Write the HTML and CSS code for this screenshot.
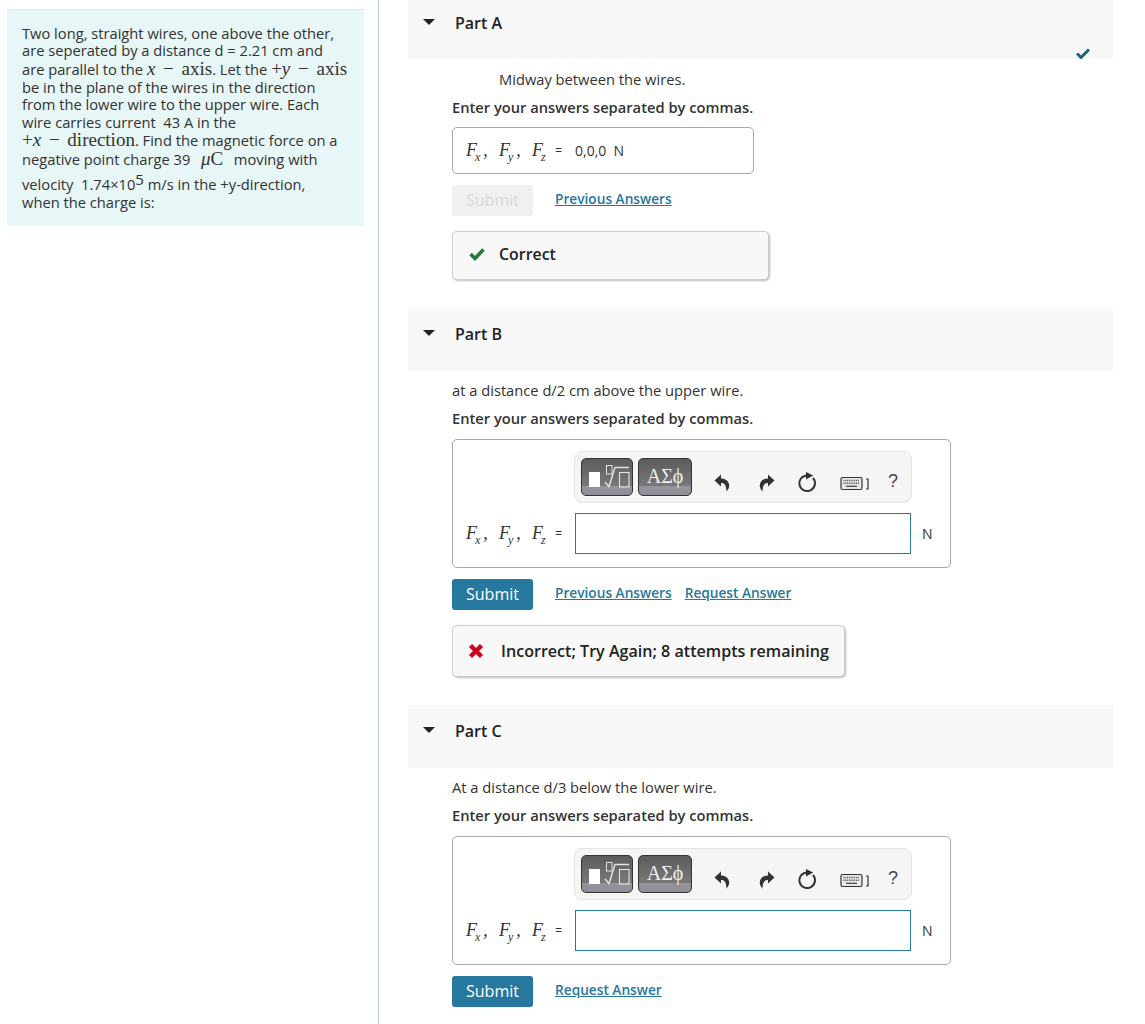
FILE: index.html
```html
<!DOCTYPE html>
<html lang="en">
<head>
<meta charset="utf-8">
<title>Magnetic force on a point charge</title>
<link rel="stylesheet" href="styles.css">
</head>
<body>
<svg class="defs" width="0" height="0" aria-hidden="true">
  <symbol id="i-undo" viewBox="0 0 16 18"><path d="M7 .5 L.5 6.5 L7 12.5 V9 C10 9 12 10 12.6 17.5 C15 15 15.6 12 15 10 C14.4 7 11.5 4.5 7 4.5 Z" fill="currentColor"/></symbol>
  <symbol id="i-redo" viewBox="0 0 16 18"><path d="M9 .5 L15.5 6.5 L9 12.5 V9 C6 9 4 10 3.4 17.5 C1 15 .4 12 1 10 C1.6 7 4.5 4.5 9 4.5 Z" fill="currentColor"/></symbol>
  <symbol id="i-reset" viewBox="0 0 18 20"><path d="M15 6 A7.8 7.8 0 1 1 9 3.4" fill="none" stroke="currentColor" stroke-width="2"/><path d="M8 0 L15.2 3.6 L8 7.4 Z" fill="currentColor"/></symbol>
  <symbol id="i-kbd" viewBox="0 0 30 16"><rect x="1" y="1.5" width="21" height="12" rx="1.5" fill="#e8e8e8" stroke="#333" stroke-width="1.2"/><path d="M3.5 4.5 H19.5 M3.5 7.2 H19.5" stroke="#555" stroke-width="1.4" stroke-dasharray="1 .8"/><path d="M6 10.3 H17" stroke="#555" stroke-width="1.4"/><path d="M26 3 H28 V13 H26" fill="none" stroke="#333" stroke-width="1.2"/></symbol>
  <symbol id="i-tpl" viewBox="0 0 50 36"><rect x="7" y="13" width="11" height="15" fill="#fff"/><rect x="24.5" y="6.5" width="5.5" height="8.5" fill="none" stroke="#e4e4e4" stroke-width="1"/><path d="M23 23 L27 27.5 L33 8.5 H47" fill="none" stroke="#e4e4e4" stroke-width="1.4"/><rect x="37.5" y="13.5" width="9.5" height="14.5" fill="none" stroke="#e4e4e4" stroke-width="1.1"/></symbol>
</svg>

<aside class="side">
  <div class="problem">
    <span class="ln">Two long, straight wires, one above the other,</span>
    <span class="ln ln-2">are seperated by a distance d = 2.21 cm and</span>
    <span class="ln ln-3">are parallel to the <span class="m"><i>x</i> − axis</span>. Let the <span class="m">+<i>y</i> − axis</span></span>
    <span class="ln ln-4">be in the plane of the wires in the direction</span>
    <span class="ln ln-4">from the lower wire to the upper wire. Each</span>
    <span class="ln">wire carries current &nbsp;43 A in the</span>
    <span class="ln"><span class="m">+<i>x</i> − direction</span>. Find the magnetic force on a</span>
    <span class="ln ln-8">negative point charge 39 &nbsp;<span class="m mu"><i>μ</i>C</span> &nbsp;moving with</span>
    <span class="ln ln-9">velocity &nbsp;1.74×10<sup>5</sup> m/s in the +y-direction,</span>
    <span class="ln">when the charge is:</span>
  </div>
</aside>

<main class="parts">
  <section class="part">
    <header class="part-head part-head-a"><span class="caret"></span><h2>Part A</h2></header>
    <svg class="done" viewBox="0 0 14 11" aria-hidden="true"><path d="M1 5.5 L5 9.5 L13 1.5" fill="none" stroke="#1d6178" stroke-width="3"/></svg>
    <div class="part-body">
      <p class="prompt prompt-indent">Midway between the wires.</p>
      <p class="hint">Enter your answers separated by commas.</p>
      <div class="answer answer-locked">
        <span class="lhs"><i class="term">F<sub>x</sub>,</i><i class="term">F<sub>y</sub>,</i><i>F<sub>z</sub></i></span><span class="eq">=</span><span class="given">0,0,0 &nbsp;N</span>
      </div>
      <div class="actions">
        <button class="submit submit-off" type="button">Submit</button>
        <a class="link" href="#">Previous Answers</a>
      </div>
      <div class="feedback fb-ok">
        <svg class="fb-icon" viewBox="0 0 16 13" aria-hidden="true"><path d="M1.5 6.5 L6 11 L14.5 2" fill="none" stroke="#267a3c" stroke-width="3.6"/></svg>
        <span>Correct</span>
      </div>
    </div>
  </section>

  <section class="part">
    <header class="part-head"><span class="caret"></span><h2>Part B</h2></header>
    <div class="part-body">
      <p class="prompt">at a distance d/2 cm above the upper wire.</p>
      <p class="hint">Enter your answers separated by commas.</p>
      <div class="answer answer-edit">
        <div class="toolbar">
          <span class="tbtn tbtn-tpl"><svg width="50" height="36"><use href="#i-tpl"/></svg></span>
          <span class="tbtn tbtn-sym">ΑΣϕ</span>
          <svg class="ti ti-undo"><use href="#i-undo"/></svg>
          <svg class="ti ti-redo"><use href="#i-redo"/></svg>
          <svg class="ti ti-reset"><use href="#i-reset"/></svg>
          <svg class="ti ti-kbd"><use href="#i-kbd"/></svg>
          <span class="ti-help">?</span>
        </div>
        <div class="entry">
          <span class="lhs"><i class="term">F<sub>x</sub>,</i><i class="term">F<sub>y</sub>,</i><i>F<sub>z</sub></i></span><span class="eq">=</span>
          <span class="field"></span><span class="unit">N</span>
        </div>
      </div>
      <div class="actions">
        <button class="submit" type="button">Submit</button>
        <a class="link" href="#">Previous Answers</a>
        <a class="link" href="#">Request Answer</a>
      </div>
      <div class="feedback fb-bad">
        <svg class="fb-icon" viewBox="0 0 16 16" aria-hidden="true"><path d="M2.5 2.5 L13.5 13.5 M13.5 2.5 L2.5 13.5" fill="none" stroke="#d0021b" stroke-width="4.4"/></svg>
        <span>Incorrect; Try Again; 8 attempts remaining</span>
      </div>
    </div>
  </section>

  <section class="part">
    <header class="part-head"><span class="caret"></span><h2>Part C</h2></header>
    <div class="part-body">
      <p class="prompt">At a distance d/3 below the lower wire.</p>
      <p class="hint">Enter your answers separated by commas.</p>
      <div class="answer answer-edit">
        <div class="toolbar">
          <span class="tbtn tbtn-tpl"><svg width="50" height="36"><use href="#i-tpl"/></svg></span>
          <span class="tbtn tbtn-sym">ΑΣϕ</span>
          <svg class="ti ti-undo"><use href="#i-undo"/></svg>
          <svg class="ti ti-redo"><use href="#i-redo"/></svg>
          <svg class="ti ti-reset"><use href="#i-reset"/></svg>
          <svg class="ti ti-kbd"><use href="#i-kbd"/></svg>
          <span class="ti-help">?</span>
        </div>
        <div class="entry">
          <span class="lhs"><i class="term">F<sub>x</sub>,</i><i class="term">F<sub>y</sub>,</i><i>F<sub>z</sub></i></span><span class="eq">=</span>
          <span class="field"></span><span class="unit">N</span>
        </div>
      </div>
      <div class="actions">
        <button class="submit" type="button">Submit</button>
        <a class="link" href="#">Request Answer</a>
      </div>
    </div>
  </section>
</main>
</body>
</html>
```

FILE: styles.css
```css
* { box-sizing: border-box; }
html, body { margin: 0; height: 1024px; overflow: hidden; }
body {
  display: flex;
  background: #fff;
  color: #333;
  font-family: "Open Sans", "Noto Sans", sans-serif;
  font-size: 14.7px;
}
.defs { position: absolute; }

.side { width: 379px; flex: none; padding: 9px 14px 0 7px; border-right: 1px solid #b9cfe4; }
.problem { background: #e7f6f6; border-top: 1px solid #dfe8e8; padding: 14px 0 0 15px; height: 217px; }
.ln { display: block; height: 18px; line-height: 18px; white-space: nowrap; }
.ln-2 { height: 17px; line-height: 17px; }
.ln-3 { height: 20px; line-height: 20px; }
.ln-4 { height: 17px; line-height: 17px; }
.ln-8 { height: 20px; line-height: 20px; }
.ln-9 { margin-top: 6px; }
.ln sup { font-size: 15px; line-height: 0; vertical-align: 5px; }
.m { font-family: "Liberation Serif", serif; font-size: 19px; word-spacing: 3px; line-height: 0; }
.mu { margin: 0 3px; }

.parts { width: 705px; margin-left: 29px; flex: none; position: relative; }
.part-head {
  height: 62.5px;
  background: #f8f8f8;
  display: flex;
  align-items: flex-start;
  padding: 16px 0 0 15px;
  gap: 20px;
}
.part-head-a { height: 59px; padding-top: 13px; }
.part-head-a .caret { margin-top: 6px; }
.caret {
  width: 0; height: 0; margin-top: 6px;
  border-left: 6.5px solid transparent; border-right: 6.5px solid transparent; border-top: 6.5px solid #222;
}
.part-head h2 { margin: 0; font-size: 16px; line-height: 20px; font-weight: 600; color: #222; }
.done { position: absolute; right: 23px; top: 48px; width: 14px; height: 11px; }

.part-body { padding: 0 0 28px 44px; }
.prompt { margin: 0; padding-top: 9.5px; line-height: 20px; height: 32px; }
.prompt-indent { padding-left: 47px; }
.hint { margin: 0; padding-top: 5.5px; height: 27px; line-height: 20px; font-weight: 600; color: #333; }

.answer { background: #fff; border: 1px solid #aaa; border-radius: 5px; }
.answer-locked { margin-top: 9px; width: 302px; height: 47px; display: flex; align-items: center; padding-left: 13px; }
.answer-edit { margin-top: 9.5px; width: 499px; height: 129px; padding: 11px 0 0 13px; }
.lhs { font-family: "Liberation Serif", serif; font-size: 18px; color: #333; white-space: nowrap; width: 89px; flex: none; }
.term { display: inline-block; width: 33px; }
.lhs sub { font-size: 12px; line-height: 0; margin-left: -2px; margin-right: 3px; }
.eq { font-size: 12.5px; width: 20px; flex: none; }
.given { font-size: 14px; white-space: nowrap; }

.toolbar {
  margin-left: 108px;
  width: 338px; height: 52px;
  background: #f5f5f5;
  border: 1px solid #e4e4e4;
  border-radius: 8px;
  display: flex;
  align-items: flex-start;
  padding: 6px 0 0 6px;
  gap: 5px;
}
.tbtn {
  height: 38px;
  border: 1px solid #333;
  border-radius: 5px;
  background: linear-gradient(#5c5c5c 0, #787878 74%, #94949c 75%, #8e8e96 100%);
  color: #eee;
  display: flex;
  justify-content: center;
  font-family: "Liberation Serif", serif;
  font-size: 20px;
  line-height: 34px;
}
.tbtn-tpl { width: 52px; }
.tbtn-sym { width: 54px; }
.ti { color: #333; height: 18px; margin-top: 16px; flex: none; }
.ti-undo { width: 16px; margin-left: 17px; }
.ti-redo { width: 16px; margin-left: 24px; }
.ti-reset { width: 18px; height: 20px; margin-top: 14px; margin-left: 18px; }
.ti-kbd { width: 30px; height: 16px; margin-top: 18px; margin-left: 19px; }
.ti-help { font-family: "Liberation Sans", sans-serif; font-size: 18px; line-height: 20px; margin-top: 13px; margin-left: 13px; color: #444; }

.entry { display: flex; align-items: center; margin-top: 10px; height: 41px; }
.field { width: 336px; height: 41px; border: 1px solid #26789e; background: #fff; flex: none; }
.unit { margin-left: 11px; font-size: 14px; }

.actions { display: flex; align-items: center; gap: 13px; margin-top: 11px; height: 31px; }
.submit {
  width: 81px; height: 31px;
  margin-right: 9px;
  background: #26789e; color: #fff;
  border: 0; border-radius: 3px;
  font: 400 16px/31px "Open Sans", sans-serif;
  padding: 0;
}
.submit-off { background: #f0f0f0; color: #d8d8d8; }
.link { color: #26789e; font-weight: 600; font-size: 13.7px; text-decoration: underline; line-height: 28px; padding-bottom: 3px; }

.feedback {
  margin-top: 15px;
  background: #f8f8f8;
  border: 1px solid #ccc;
  border-radius: 5px;
  box-shadow: 1px 1px 2px #bbb;
  display: flex;
  align-items: center;
  font-weight: 600;
  font-size: 15.9px;
  color: #222;
}
.fb-ok { width: 317px; height: 49px; padding: 0 0 3px 16px; gap: 14px; }
.fb-bad { width: 393px; height: 52px; padding-left: 15px; gap: 17px; font-size: 16.1px; }
.fb-icon { width: 16px; height: 16px; flex: none; }
```
